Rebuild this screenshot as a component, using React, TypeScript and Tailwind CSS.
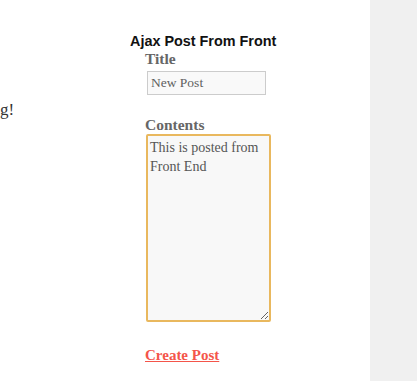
import { useState } from "react";

export default function App() {
  const [title, setTitle] = useState("New Post");
  const [content, setContent] = useState("This is posted from Front End");

  return (
    <div className="flex h-[381px] w-full bg-white">
      {/* main column */}
      <div className="flex w-[370px] shrink-0 bg-white">
        <div className="w-[130px] shrink-0 pt-[100px] font-['Liberation_Serif',serif] text-[17px] leading-[20px] text-[#333]">
          g!
        </div>
        <div className="flex-1 pt-[33px]">
          <h2 className="font-['Liberation_Sans',Arial,sans-serif] text-[14.4px] font-bold leading-[16px] text-[#111]">
            Ajax Post From Front
          </h2>
          <form
            className="pl-[15px] font-['Liberation_Serif',serif] text-[#666]"
            onSubmit={(e) => e.preventDefault()}
          >
            <label className="block text-[15.5px] font-bold leading-[20px]">Title</label>
            <input
              type="text"
              value={title}
              onChange={(e) => setTitle(e.target.value)}
              className="ml-[2px] mt-[2px] block h-[24px] w-[119px] border border-[#ccc] bg-[#f9f9f9] px-[3px] text-[13.5px] text-[#5f5f5f] outline-none"
            />
            <label className="mt-[20px] block text-[15.5px] font-bold leading-[19px]">Contents</label>
            <textarea
              value={content}
              onChange={(e) => setContent(e.target.value)}
              className="ml-[1px] block h-[188px] w-[125px] rounded-[2px] border-2 border-[#e9b85e] bg-[#f8f8f8] px-[2px] pt-[2px] text-[14px] leading-[19px] text-[#555] outline-none"
            />
            <a
              href="#"
              className="mt-[24px] inline-block text-[15px] font-bold leading-[18px] text-[#f4554a] underline"
            >
              Create Post
            </a>
          </form>
        </div>
      </div>
      {/* sidebar */}
      <div className="flex-1 bg-[#f0f0f0]" />
    </div>
  );
}
